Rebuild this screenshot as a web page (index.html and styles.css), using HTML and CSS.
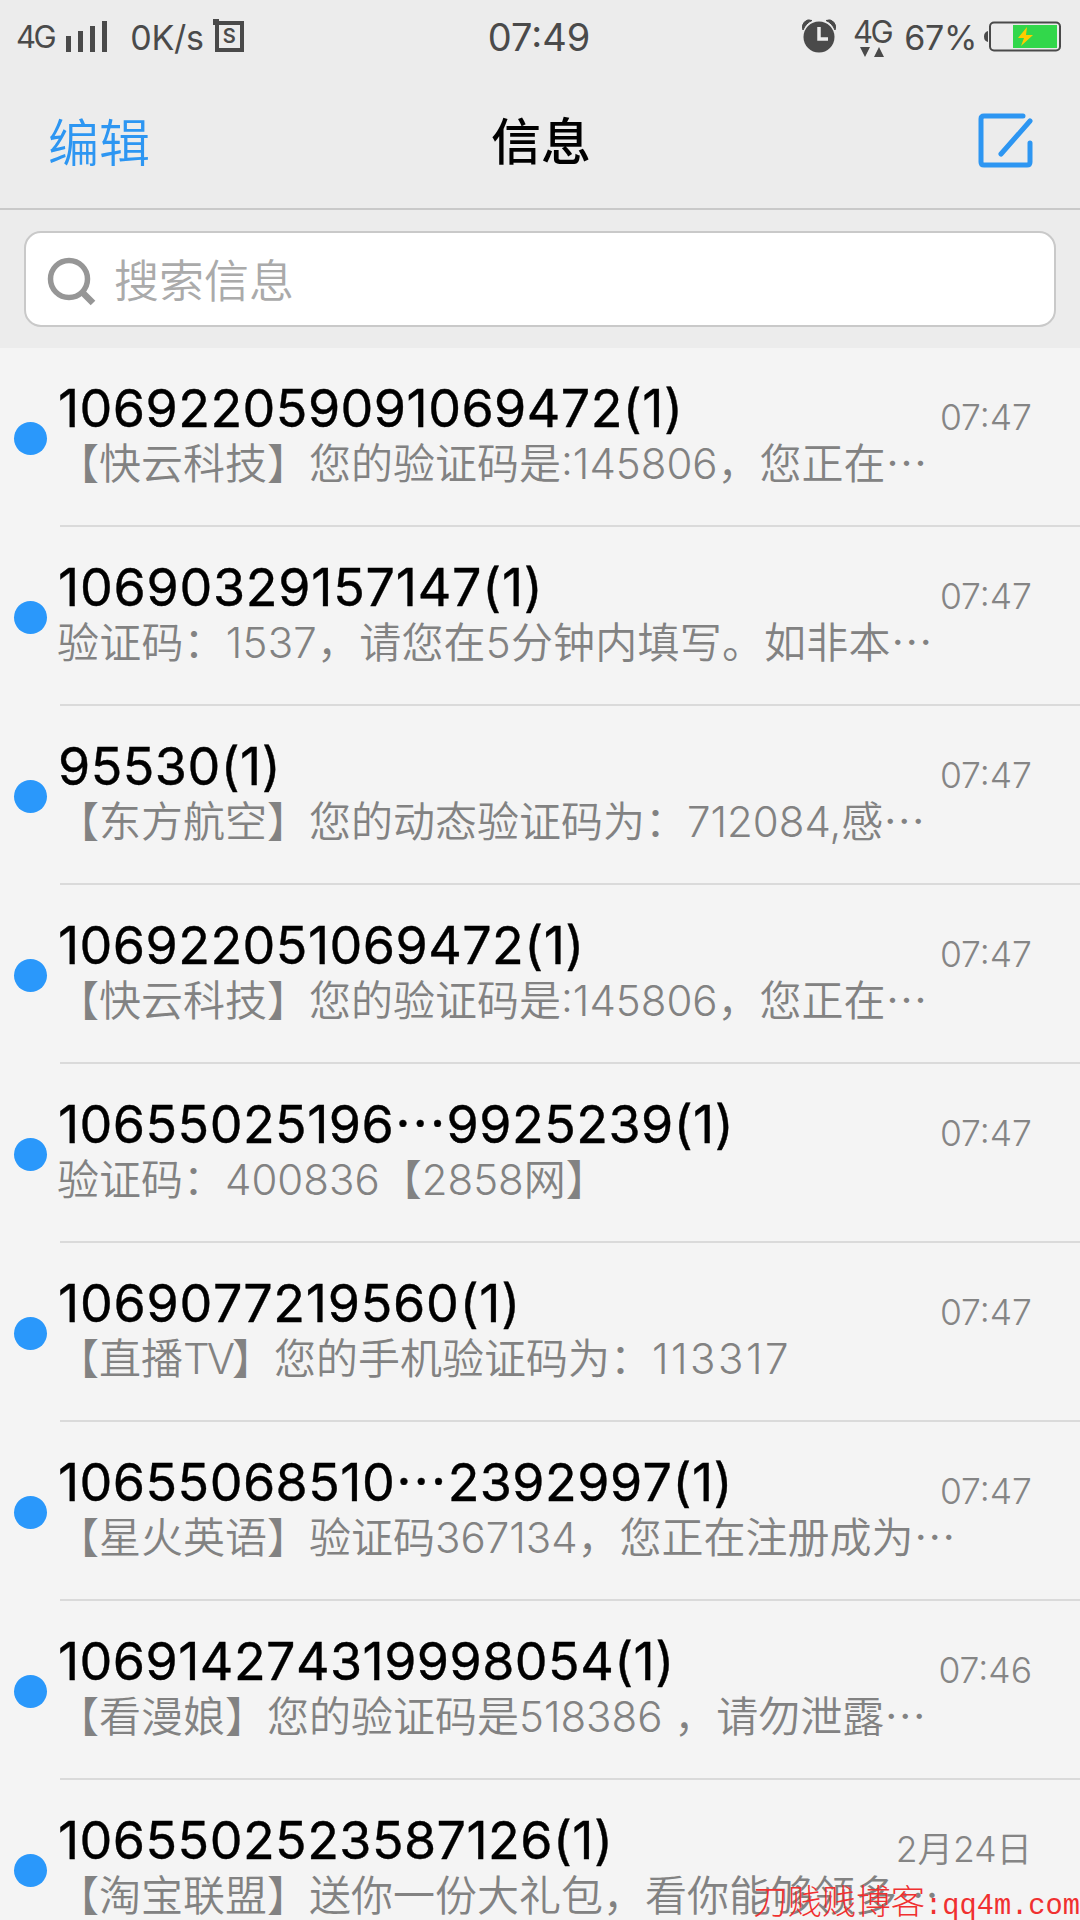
FILE: index.html
```html
<!DOCTYPE html>
<html lang="zh-CN">
<head>
    <meta charset="utf-8">
    <meta name="viewport" content="width=device-width, initial-scale=1.0">
    <title>信息</title>
    <link rel="stylesheet" href="styles.css">
</head>
<body>
    <div class="phone">
        <header class="top">
            <div class="status-bar">
                <div class="status-left">
                    <span class="net">4G</span>
                    <svg class="signal" width="42" height="31" viewBox="0 0 42 31" fill="#4a4a4a">
                        <rect x="0" y="15" width="5" height="16"/>
                        <rect x="12" y="10" width="5" height="21"/>
                        <rect x="24" y="5" width="5" height="26"/>
                        <rect x="36" y="0" width="5" height="31"/>
                    </svg>
                    <span class="speed">0K/s</span>
                    <span class="app-badge">S</span>
                </div>
                <div class="clock">07:49</div>
                <div class="status-right">
                    <svg class="alarm" width="34" height="34" viewBox="0 0 34 34">
                        <path d="M1 11A7 7 0 0 1 10 1.500Q4 4 1 11ZM33 11A7 7 0 0 0 24 1.500Q30 4 33 11Z" fill="#4a4a4a" stroke="#4a4a4a"/>
                        <circle cx="17" cy="18" r="15.500" fill="#4a4a4a"/>
                        <path d="M17 8V20H26" fill="none" stroke="#ececec" stroke-width="3.500"/>
                    </svg>
                    <span class="data">
                        <span class="net">4G</span>
                        <svg width="24" height="10" viewBox="0 0 24 10" fill="#4a4a4a"><path d="M0 0H10L5 10ZM14 10H24L19 0Z"/></svg>
                    </span>
                    <span class="percent">67%</span>
                    <svg class="battery" width="78" height="32" viewBox="0 0 78 32">
                        <path d="M4 10Q0 11 0 15.500T4 21Z" fill="#4a4a4a"/>
                        <rect x="6" y="1.500" width="70" height="28" rx="4" fill="none" stroke="#4a4a4a" stroke-width="2"/>
                        <rect x="29" y="4" width="44" height="23" fill="#32d74b"/>
                        <path d="M43 6L34 17H40L37 25L49 14H42Z" fill="#ffcc00"/>
                    </svg>
                </div>
            </div>
            <nav class="nav-bar">
                <a class="nav-edit">编辑</a>
                <h1 class="nav-title">信息</h1>
                <svg class="compose" width="56" height="56" viewBox="0 0 56 56" fill="none" stroke="#2d96f2" stroke-width="5" stroke-linecap="round">
                    <path d="M45 3H6Q3 3 3 6V49Q3 52 6 52H49Q52 52 52 49V30"/>
                    <path d="M52 8L23 41"/>
                </svg>
            </nav>
        </header>

        <div class="search-wrap">
            <div class="search-box">
                <svg class="search-icon" width="50" height="50" viewBox="0 0 50 50" fill="none" stroke="#969696">
                    <circle cx="22" cy="22" r="18.500" stroke-width="5.500"/>
                    <path d="M35 35L46 46" stroke-width="6.500"/>
                </svg>
                <span class="search-text">搜索信息</span>
            </div>
        </div>

        <main class="list">
            <div class="item">
                <i class="dot"></i>
                <div class="item-body">
                    <div class="name">106922059091069472(1)</div>
                    <div class="preview">【快云科技】您的验证码是:145806，您正在<span class="dots">…</span></div>
                    <time class="time">07:47</time>
                </div>
            </div>
            <div class="item">
                <i class="dot"></i>
                <div class="item-body">
                    <div class="name name-wide">10690329157147(1)</div>
                    <div class="preview wide">验证码：1537，请您在5分钟内填写。如非本<span class="dots">…</span></div>
                    <time class="time">07:47</time>
                </div>
            </div>
            <div class="item">
                <i class="dot"></i>
                <div class="item-body">
                    <div class="name">95530(1)</div>
                    <div class="preview">【东方航空】您的动态验证码为：712084,感<span class="dots">…</span></div>
                    <time class="time">07:47</time>
                </div>
            </div>
            <div class="item">
                <i class="dot"></i>
                <div class="item-body">
                    <div class="name">106922051069472(1)</div>
                    <div class="preview">【快云科技】您的验证码是:145806，您正在<span class="dots">…</span></div>
                    <time class="time">07:47</time>
                </div>
            </div>
            <div class="item">
                <i class="dot"></i>
                <div class="item-body">
                    <div class="name">10655025196<span class="dots">…</span>9925239(1)</div>
                    <div class="preview">验证码：400836【2858网】</div>
                    <time class="time">07:47</time>
                </div>
            </div>
            <div class="item">
                <i class="dot"></i>
                <div class="item-body">
                    <div class="name name-wide">1069077219560(1)</div>
                    <div class="preview">【直播<span class="latin">TV</span>】您的手机验证码为：<span class="code">113317</span></div>
                    <time class="time">07:47</time>
                </div>
            </div>
            <div class="item">
                <i class="dot"></i>
                <div class="item-body">
                    <div class="name">10655068510<span class="dots">…</span>2392997(1)</div>
                    <div class="preview">【星火英语】验证码367134，您正在注册成为<span class="dots">…</span></div>
                    <time class="time">07:47</time>
                </div>
            </div>
            <div class="item">
                <i class="dot"></i>
                <div class="item-body">
                    <div class="name">106914274319998054(1)</div>
                    <div class="preview">【看漫娘】您的验证码是518386 ，请勿泄露<span class="dots">…</span></div>
                    <time class="time">07:46</time>
                </div>
            </div>
            <div class="item">
                <i class="dot"></i>
                <div class="item-body">
                    <div class="name">1065502523587126(1)</div>
                    <div class="preview">【淘宝联盟】送你一份大礼包，看你能够领多<span class="dots">…</span></div>
                    <time class="time">2月24日</time>
                </div>
            </div>
        </main>

        <div class="watermark">刀贱贱博客<span class="site">:qq4m.com</span></div>
    </div>
</body>
</html>
```

FILE: styles.css
```css
* {
    box-sizing: border-box;
}

body {
    margin: 0;
    background-color: #f4f4f4;
    font-family: Inter, "Noto Sans CJK SC", sans-serif;
}

.phone {
    position: relative;
    width: 1080px;
    height: 1920px;
    overflow: hidden;
}

.top {
    height: 210px;
    background-color: #ececec;
    border-bottom: 2px solid #c9c9c9;
}

/* Barra de estado */
.status-bar {
    display: grid;
    grid-template-columns: 1fr auto 1fr;
    align-items: center;
    height: 74px;
    padding: 0 18px 0 16px;
    color: #4a4a4a;
}

.status-left,
.status-right {
    display: flex;
    align-items: center;
}

.status-right {
    justify-content: flex-end;
}

.net {
    font-size: 31px;
    line-height: 30px;
    letter-spacing: -2.5px;
}

.signal {
    margin: 0 0 2px 12px;
}

.speed {
    margin-left: 22px;
    font-size: 34px;
    letter-spacing: -0.2px;
}

.app-badge {
    position: relative;
    width: 29px;
    height: 31px;
    margin: 0 0 1px 11px;
    border: 4px solid #4a4a4a;
    font-size: 20px;
    font-weight: 600;
    line-height: 23px;
    text-align: center;
}

.app-badge::before {
    content: "";
    position: absolute;
    top: -6px;
    left: -6px;
    width: 6px;
    height: 6px;
    background-color: #4a4a4a;
}

.clock {
    font-size: 38px;
}

.alarm {
    margin-bottom: 2px;
}

.data {
    display: flex;
    flex-direction: column;
    align-items: center;
    margin: 0 13px 0 17px;
}

.percent {
    margin-right: 7px;
    font-size: 34px;
    letter-spacing: -0.3px;
}

.nav-bar {
    display: grid;
    grid-template-columns: 1fr auto 1fr;
    align-items: center;
    height: 134px;
    padding: 0 46px 0 48px;
}

.nav-edit {
    padding-bottom: 3px;
    color: #2d96f2;
    font-size: 51px;
    font-weight: 350;
}

.nav-title {
    margin: 0;
    padding-bottom: 6px;
    font-size: 50px;
    font-weight: 500;
}

.compose {
    justify-self: end;
}

/* Buscador */
.search-wrap {
    height: 138px;
    padding: 21px 24px;
    background-color: #ececec;
}

.search-box {
    display: flex;
    align-items: center;
    height: 96px;
    padding-left: 21px;
    background-color: #fff;
    border: 2px solid #c9c9c9;
    border-radius: 17px;
}

.search-icon {
    margin-top: 6px;
}

.search-text {
    margin: 0 0 2px 17px;
    color: #aaa;
    font-size: 45px;
    font-weight: 350;
}

/* Lista de mensajes */
.item {
    display: flex;
    height: 179px;
}

.dot {
    width: 33px;
    height: 33px;
    margin: 74px 13px 0 14px;
    background-color: #2a98fb;
    border-radius: 50%;
}

.item-body {
    display: grid;
    grid-template-columns: 1fr auto;
    grid-template-rows: 58px 58px;
    flex: 1;
    padding: 30px 48px 0 0;
    background: linear-gradient(#dadada, #dadada) bottom / 100% 2px no-repeat;
}

.name {
    margin-left: -2px;
    color: #000;
    font-size: 52px;
    font-weight: 400;
    font-kerning: none;
    letter-spacing: 0.45px;
    line-height: 61px;
    white-space: nowrap;
    -webkit-text-stroke: 0.4px #000;
}

.name-wide {
    letter-spacing: 0.75px;
}

.preview {
    grid-row: 2;
    grid-column: 1 / 3;
    margin-left: -3px;
    color: #828282;
    font-size: 42px;
    font-weight: 350;
    line-height: 56px;
    white-space: nowrap;
}

.wide {
    letter-spacing: 0.2px;
}

.latin {
    letter-spacing: -3px;
}

.code {
    letter-spacing: 2.5px;
}

.time {
    grid-row: 1;
    grid-column: 2;
    padding-top: 10px;
    color: #858585;
    font-size: 35.5px;
    font-weight: 350;
    line-height: 60px;
}

.dots {
    font-family: "Noto Sans CJK SC", sans-serif;
    line-height: 1;
}

.watermark {
    position: absolute;
    right: 0;
    bottom: -9px;
    color: #f03030;
    font-family: "Liberation Serif", "Noto Sans CJK SC", serif;
    font-size: 34.4px;
    font-weight: 300;
    line-height: 44px;
    white-space: nowrap;
}

.site {
    font-family: "Liberation Mono", monospace;
    font-size: 28.7px;
}
```
